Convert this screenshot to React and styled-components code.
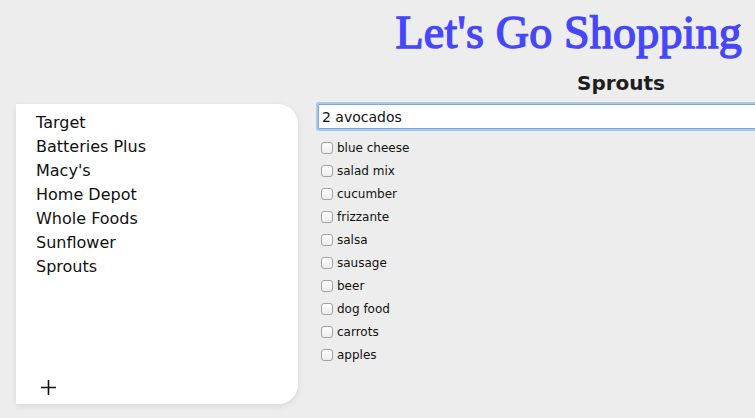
import React from 'react'
import styled, { createGlobalStyle } from 'styled-components'

const GlobalStyle = createGlobalStyle`
  html, body {
    margin: 0;
    padding: 0;
    background: #ededed;
    overflow: hidden;
  }
  body {
    font-family: "DejaVu Sans", Verdana, sans-serif;
    color: #111;
  }
`

const Page = styled.div`
  width: 755px;
  height: 418px;
  overflow: hidden;
`

const Header = styled.h1`
  margin: 0;
  padding: 7px 13px 0 0;
  text-align: right;
  font-family: "Liberation Serif", "Times New Roman", serif;
  font-weight: 400;
  font-size: 46px;
  line-height: 52px;
  letter-spacing: 0.2px;
  color: #4646fb;
  -webkit-text-stroke: 1.4px #4646fb;
  white-space: nowrap;
`

const Layout = styled.div`
  display: grid;
  grid-template-columns: 282px 606px;
  grid-template-rows: auto 1fr;
  column-gap: 20px;
  padding-left: 16px;
`

const StoreTitle = styled.h2`
  grid-column: 2;
  margin: 0;
  height: 45px;
  padding-top: 12px;
  box-sizing: border-box;
  text-align: center;
  font-size: 20px;
  line-height: 24px;
  font-weight: 700;
  color: #1e1e1e;
`

const Sidebar = styled.aside`
  grid-column: 1;
  grid-row: 2;
  height: 300px;
  background: #fff;
  border-radius: 0 20px 20px 0;
  box-shadow: 0 2px 6px rgba(0, 0, 0, 0.09);
  display: flex;
  flex-direction: column;
  justify-content: space-between;
  box-sizing: border-box;
  padding: 7px 0 8px 20px;
`

const StoreList = styled.ul`
  list-style: none;
  margin: 0;
  padding: 0;
`

const Store = styled.li`
  font-size: 16px;
  line-height: 24px;
  color: #111;
`

const AddButton = styled.button`
  border: none;
  background: none;
  padding: 0;
  margin-left: 3px;
  width: 18px;
  height: 18px;
  display: flex;
  align-items: center;
  justify-content: center;
  cursor: pointer;
`

const Content = styled.section`
  grid-column: 2;
  grid-row: 2;
  display: flex;
  flex-direction: column;
`

const ItemInput = styled.input`
  box-sizing: border-box;
  width: 606px;
  height: 25px;
  border: 1px solid #7aa7e0;
  box-shadow: 0 0 0 2px #a9c8f0;
  border-radius: 1px;
  padding: 0 3px;
  font-family: "DejaVu Sans", Verdana, sans-serif;
  font-size: 14px;
  color: #111;
  outline: none;
  background: #fff;
`

const ItemList = styled.ul`
  list-style: none;
  margin: 7px 0 0;
  padding: 0 0 0 3px;
`

const Item = styled.li`
  display: flex;
  align-items: center;
  height: 23px;
  font-size: 12px;
  color: #111;
`

const Check = styled.input.attrs({ type: 'checkbox' })`
  appearance: none;
  margin: 0 4px 0 0;
  width: 12px;
  height: 12px;
  border: 1px solid #a3a3a3;
  border-radius: 3px;
  background: linear-gradient(#ffffff, #ececec);
  box-sizing: border-box;
`

const stores = ['Target', 'Batteries Plus', "Macy's", 'Home Depot', 'Whole Foods', 'Sunflower', 'Sprouts']
const items = ['blue cheese', 'salad mix', 'cucumber', 'frizzante', 'salsa', 'sausage', 'beer', 'dog food', 'carrots', 'apples']

export default function App() {
  return (
    <Page>
      <GlobalStyle />
      <Header>Let's Go Shopping</Header>
      <Layout>
        <StoreTitle>Sprouts</StoreTitle>
        <Sidebar>
          <StoreList>
            {stores.map(s => <Store key={s}>{s}</Store>)}
          </StoreList>
          <AddButton aria-label="add store">
            <svg width="17" height="17" viewBox="0 0 17 17">
              <path d="M8.5 1v15M1 8.5h15" stroke="#111" strokeWidth="1.6" />
            </svg>
          </AddButton>
        </Sidebar>
        <Content>
          <ItemInput defaultValue="2 avocados" />
          <ItemList>
            {items.map(i => (
              <Item key={i}>
                <Check />
                {i}
              </Item>
            ))}
          </ItemList>
        </Content>
      </Layout>
    </Page>
  )
}
